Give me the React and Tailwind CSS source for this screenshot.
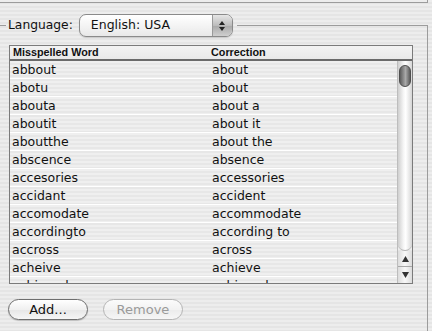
import React from "react";

const rows = [
  ["abbout", "about"],
  ["abotu", "about"],
  ["abouta", "about a"],
  ["aboutit", "about it"],
  ["aboutthe", "about the"],
  ["abscence", "absence"],
  ["accesories", "accessories"],
  ["accidant", "accident"],
  ["accomodate", "accommodate"],
  ["accordingto", "according to"],
  ["accross", "across"],
  ["acheive", "achieve"],
  ["achieved", "achieved"],
];

export default function App() {
  return (
    <div
      className="w-[432px] h-[331px] overflow-hidden text-[#111] bg-[repeating-linear-gradient(to_bottom,#ededed_0px,#ededed_2px,#e5e5e5_2px,#e5e5e5_4px)]"
      style={{ fontFamily: '"DejaVu Sans", sans-serif' }}
    >
      {/* previous box bottom edge */}
      <div className="w-[428px] h-[3px] border-b border-r border-[#9c9c9c]" />

      {/* group header */}
      <div className="mt-[10px] flex items-center h-[25px] w-[428px]">
        <div className="w-[6px] self-end h-[13px] border-t border-[#9c9c9c]" />
        <span className="ml-[2px] text-[12.3px] leading-none">Language:</span>
        <div className="ml-[6px] flex h-[23px] w-[154px] rounded-[7px] border border-[#8a8a8a] bg-[linear-gradient(to_bottom,#ffffff,#f4f4f4_50%,#e8e8e8)] shadow-[0_1px_1px_rgba(0,0,0,0.15)] overflow-hidden">
          <div className="flex-1 flex items-center pl-[11px] text-[12.5px] leading-none">English: USA</div>
          <div className="w-[20px] border-l border-[#9a9a9a] bg-[linear-gradient(to_bottom,#e6e6e6,#bcbcbc_50%,#a8a8a8_51%,#cfcfcf)] flex flex-col items-center justify-center gap-[2px]">
            <svg width="6" height="4" viewBox="0 0 6 4"><path d="M3 0L6 4H0Z" fill="#222" /></svg>
            <svg width="6" height="4" viewBox="0 0 6 4"><path d="M0 0H6L3 4Z" fill="#222" /></svg>
          </div>
        </div>
        <div className="ml-[4px] flex-1 self-end h-[13px] border-t border-r border-[#9c9c9c]" />
      </div>

      {/* group body */}
      <div className="w-[428px] h-[300px] border-r border-[#9c9c9c] pl-[9px] pt-[7px]">
        {/* table */}
        <div className="w-[404px] h-[239px] border border-[#7b7b7b] flex flex-col">
          <div
            className="h-[15px] flex border-b-2 border-[#6a6a6a] bg-[linear-gradient(to_bottom,#f3f3f3,#e9e9e9)] text-[10.8px] font-bold leading-[13px]"
            style={{ fontFamily: '"Liberation Sans", sans-serif' }}
          >
            <div className="w-[200px] pl-[3px]">Misspelled Word</div>
            <div className="flex-1 pl-[1px]">Correction</div>
          </div>
          <div className="flex-1 flex overflow-hidden">
            <div className="flex-1 overflow-hidden bg-[repeating-linear-gradient(to_bottom,#efefef_0px,#efefef_2px,#e7e7e7_2px,#e7e7e7_4px)]">
              {rows.map(([a, b]) => (
                <div key={a} className="h-[18px] flex border-b border-white text-[12.5px] leading-[17px]">
                  <div className="w-[200px] pl-[2px]">{a}</div>
                  <div className="flex-1 pl-[2px]">{b}</div>
                </div>
              ))}
            </div>
            {/* scrollbar */}
            <div className="w-[15px] flex flex-col border-l border-[#bdbdbd]">
              <div className="flex-1 rounded-b-[7px] bg-[linear-gradient(to_right,#cfcfcf,#f6f6f6_40%,#ffffff_55%,#d6d6d6)] border-b border-[#b5b5b5] px-[1px] pt-[4px]">
                <div className="h-[22px] rounded-full border border-[#4f4f4f] bg-[linear-gradient(to_right,#5d5d5d,#9a9a9a_45%,#a9a9a9_55%,#5d5d5d)]" />
              </div>
              <div className="h-[16px] flex items-center justify-center border-b border-[#a8a8a8] bg-[linear-gradient(to_right,#dcdcdc,#f8f8f8_50%,#dcdcdc)]">
                <svg width="7" height="6" viewBox="0 0 7 6"><path d="M3.5 0L7 6H0Z" fill="#333" /></svg>
              </div>
              <div className="h-[16px] flex items-center justify-center bg-[linear-gradient(to_right,#dcdcdc,#f8f8f8_50%,#dcdcdc)]">
                <svg width="7" height="6" viewBox="0 0 7 6"><path d="M0 0H7L3.5 6Z" fill="#333" /></svg>
              </div>
            </div>
          </div>
        </div>

        {/* buttons */}
        <div className="mt-[15px] -ml-[1px] flex gap-[15px]">
          <button className="w-[80px] h-[21px] rounded-full border border-[#6e6e6e] bg-[linear-gradient(to_bottom,#ffffff,#f0f0f0_50%,#e6e6e6_51%,#f6f6f6)] text-[13px] leading-none text-[#111] shadow-[0_1px_1px_rgba(0,0,0,0.2)]">
            Add...
          </button>
          <button className="w-[80px] h-[21px] rounded-full border border-[#b4b4b4] bg-[linear-gradient(to_bottom,#fbfbfb,#f2f2f2_50%,#ebebeb_51%,#f6f6f6)] text-[13px] leading-none text-[#9a9a9a]">
            Remove
          </button>
        </div>
      </div>
    </div>
  );
}
